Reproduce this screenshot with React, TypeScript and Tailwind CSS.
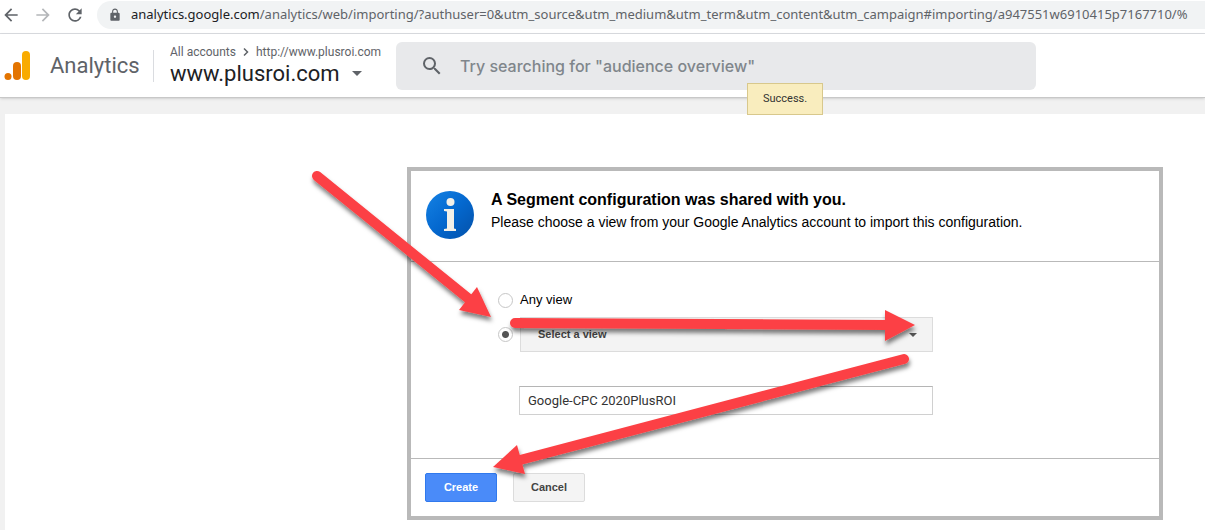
import { MdArrowBack, MdArrowForward, MdLock, MdRefresh, MdSearch } from 'react-icons/md'

function Logo() {
  return (
    <svg viewBox="0 0 26 30" className="w-[26px] h-[30px] shrink-0" aria-hidden="true">
      <rect x="18" y="0" width="8" height="29" rx="4" fill="#f9ab00" />
      <rect x="9" y="11" width="8" height="18" rx="4" fill="#e37400" />
      <circle cx="4" cy="25.500" r="3.500" fill="#e37400" />
    </svg>
  )
}

function InfoIcon() {
  return (
    <svg viewBox="0 0 48 48" className="size-12 shrink-0" aria-hidden="true">
      <defs>
        <linearGradient id="info-blue" x1="0" y1="0" x2="1" y2="1">
          <stop offset="0" stopColor="#1582e4" />
          <stop offset="0.5" stopColor="#0468cf" />
          <stop offset="1" stopColor="#0451a8" />
        </linearGradient>
      </defs>
      <circle cx="24" cy="24" r="24" fill="url(#info-blue)" />
      <circle cx="24.500" cy="11" r="4" fill="#f3f0e8" />
      <path d="M18 18h10v19.500l2 .5V40H18v-2l3-.5v-17L18 20z" fill="#f3f0e8" />
    </svg>
  )
}

function Arrows() {
  return (
    <svg
      viewBox="300 160 640 330"
      className="absolute -left-[111px] -top-[11px] w-[640px] h-[330px] max-w-none pointer-events-none"
      aria-hidden="true"
    >
      <defs>
        <filter id="arrow-shadow" x="-10%" y="-50%" width="120%" height="220%">
          <feDropShadow dx="1" dy="4" stdDeviation="2" floodColor="#000" floodOpacity="0.5" />
        </filter>
      </defs>
      <g fill="#fc4144" stroke="#fc4144" strokeLinecap="round">
        <g filter="url(#arrow-shadow)">
          <path d="M317 176L469 299" strokeWidth="10" />
          <path d="M491 317L477 287L459 310z" stroke="none" />
        </g>
        <g filter="url(#arrow-shadow)">
          <path d="M515 323L887 325" strokeWidth="10" />
          <path d="M915 325L885 310V341z" stroke="none" />
        </g>
        <g filter="url(#arrow-shadow)">
          <path d="M904 359L520 460" strokeWidth="10" />
          <path d="M493 467L517 445L525 474z" stroke="none" />
        </g>
      </g>
    </svg>
  )
}

function BrowserBar() {
  return (
    <div className="flex items-start h-[34px] border-b border-[#dadce0] bg-white overflow-hidden">
      <div className="flex items-center gap-3 h-[30px] pl-px w-[97px] shrink-0 text-[#5f6368]">
        <button type="button" aria-label="Back">
          <MdArrowBack size={20} />
        </button>
        <button type="button" aria-label="Forward" className="text-[#b4b6b9]">
          <MdArrowForward size={20} />
        </button>
        <button type="button" aria-label="Reload">
          <MdRefresh size={20} />
        </button>
      </div>
      <div className="flex items-center flex-1 min-w-0 h-7 mt-px pl-[11px] gap-[9px] rounded-l-full bg-[#f1f3f4] overflow-hidden">
        <MdLock size={14} className="shrink-0 text-[#5f6368]" />
        <span className="whitespace-nowrap text-[13px] text-[#5f6368] font-['Noto_Sans',sans-serif]">
          <span className="text-[#202124]">analytics.google.com</span>
          /analytics/web/importing/?authuser=0&amp;utm_source&amp;utm_medium&amp;utm_term&amp;utm_content&amp;utm_campaign#importing/a947551w6910415p7167710/%
        </span>
      </div>
    </div>
  )
}

function Header() {
  return (
    <header className="relative z-10 flex items-center h-16 pl-1 bg-white border-b border-[#c8c8c8] shadow-sm">
      <Logo />
      <span className="ml-5 w-[103px] shrink-0 text-[22px] text-[#5f6368] font-['Roboto',sans-serif]">Analytics</span>
      <div className="flex flex-col justify-center w-[243px] h-8 pl-4 shrink-0 border-l border-[#dadce0] font-['Roboto',sans-serif]">
        <nav className="flex items-center gap-0.5 text-xs leading-4 text-[#5f6368]">
          <a href="#accounts">All accounts</a>
          <svg viewBox="0 0 16 16" className="size-4" fill="none" stroke="currentColor" strokeWidth="1.500" aria-hidden="true">
            <path d="M6 4.500l3.500 3.500L6 11.500" />
          </svg>
          <a href="#property">http://www.plusroi.com</a>
        </nav>
        <button type="button" className="flex items-center gap-3 text-[22px] leading-7 text-[#202124]">
          www.plusroi.com
          <svg viewBox="0 0 10 5" className="w-2.5 h-[5px]" fill="#5f6368" aria-hidden="true">
            <path d="M0 0h10L5 5z" />
          </svg>
        </button>
      </div>
      <label className="flex items-center flex-1 max-w-[640px] h-12 pl-6 gap-4 rounded-md bg-[#e8e9eb]">
        <MdSearch size={24} className="shrink-0 text-[#5f6368]" />
        <input
          type="search"
          aria-label="Search"
          placeholder={'Try searching for "audience overview"'}
          className="flex-1 min-w-0 bg-transparent text-base outline-none placeholder:text-[#80868b] font-medium font-['Inter',sans-serif]"
        />
      </label>
      <div
        role="status"
        className="absolute left-[747px] top-[49px] px-[15px] h-8 leading-[30px] border border-[#d8c88c] bg-[#f9edbe] text-[11px] text-[#333] font-['Roboto',sans-serif]"
      >
        Success.
      </div>
    </header>
  )
}

const radio =
  'appearance-none size-[15px] shrink-0 rounded-full border border-[#c6c6c6] bg-white checked:bg-[radial-gradient(circle,#555_3px,#fff_4px)]'

function ImportDialog() {
  return (
    <form className="relative ml-[402px] mr-[42px] max-w-[756px] border-4 border-[#b9b9b9] bg-white text-black font-['Liberation_Sans',Arial,sans-serif]">
      <div className="flex gap-[17px] pl-[15px] pr-4 pt-5 h-[91px] border-b border-[#b9b9b9]">
        <InfoIcon />
        <div>
          <h1 className="text-base leading-[18px] font-bold">A Segment configuration was shared with you.</h1>
          <p className="text-sm leading-[18px] mt-1">
            Please choose a view from your Google Analytics account to import this configuration.
          </p>
        </div>
      </div>

      <div className="pl-[87px] pt-7 pb-[43px] pr-[226px] border-b border-[#b9b9b9]">
        <div className="flex items-center gap-[7px] h-5">
          <input type="radio" name="view" id="any-view" className={radio} />
          <label htmlFor="any-view" className="text-[13px]">Any view</label>
        </div>
        <div className="flex items-center gap-[7px] mt-[7px]">
          <input type="radio" name="view" aria-label="Selected view" defaultChecked className={radio} />
          <div className="relative flex-1">
            <select
              aria-label="Select a view"
              className="appearance-none block w-full h-[35px] pl-[17px] pr-8 border border-[#dcdcdc] bg-[#f3f3f3] text-[11px] font-bold text-[#444]"
            >
              <option>Select a view</option>
            </select>
            <svg viewBox="0 0 8 4" className="absolute right-4 top-4 w-2 h-1 pointer-events-none" fill="#555" aria-hidden="true">
              <path d="M0 0h8L4 4z" />
            </svg>
          </div>
        </div>
        <div className="flex mt-[34px] pl-[21px]">
          <input
            type="text"
            aria-label="Segment name"
            defaultValue="Google-CPC 2020PlusROI"
            className="w-full h-[29px] px-2 border border-[#d0d0d0] border-t-[#b5b5b5] text-[13px] text-[#333] font-['Roboto',sans-serif]"
          />
        </div>
      </div>

      <div className="flex gap-4 px-3.5 py-3.5 text-[11px] font-bold">
        <button type="button" className="w-[72px] h-[29px] rounded-xs border border-[#3079ed] bg-[#4a8bf9] text-white">
          Create
        </button>
        <button type="button" className="w-[72px] h-[29px] rounded-xs border border-[#dcdcdc] bg-[#f4f4f4] text-[#444]">
          Cancel
        </button>
      </div>

      <Arrows />
    </form>
  )
}

export default function App() {
  return (
    <div className="flex flex-col min-h-screen bg-[#f1f1f1] overflow-x-hidden">
      <BrowserBar />
      <Header />
      <main className="flex-1 ml-[5px] mt-4 pt-[53px] pb-2.5 bg-white">
        <ImportDialog />
      </main>
    </div>
  )
}
